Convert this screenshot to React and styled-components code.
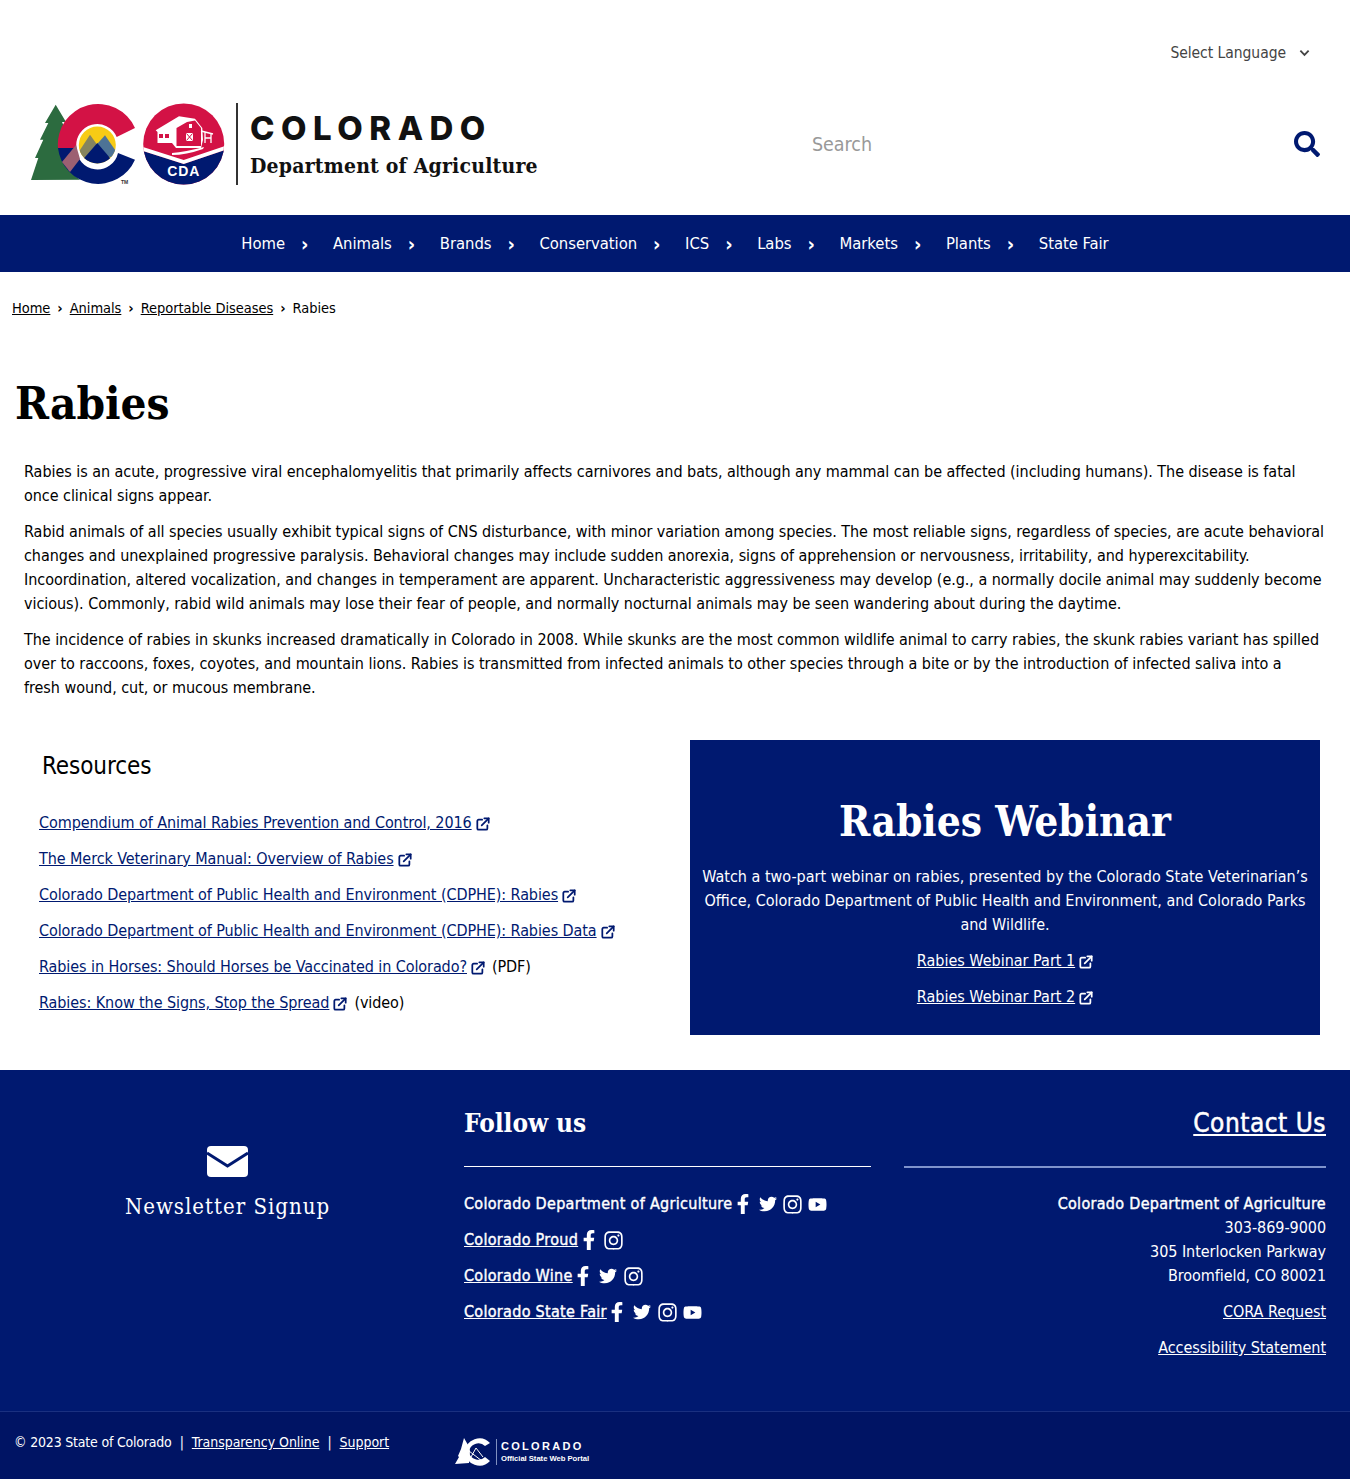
// Imports
import React from 'react';
import styled, { createGlobalStyle, css } from 'styled-components';
import { FaFacebookF, FaTwitter, FaInstagram, FaYoutube, FaSearch } from 'react-icons/fa';

const NAVY = '#001970';
const BODY_FONT = '"DejaVu Sans Condensed", "DejaVu Sans", sans-serif';
const HEAD_FONT = '"DejaVu Serif Condensed", "DejaVu Serif", serif';

const GlobalStyle = createGlobalStyle`
	html, body{
		margin: 0;
		padding: 0;
		background: #fff;
		color: #000;
		font-family: ${BODY_FONT};
		font-size: 16px;
		line-height: 24px;
		letter-spacing: -0.045px;
	}
	*{
		box-sizing: border-box;
	}
`;

// Data
const navItems = ['Home', 'Animals', 'Brands', 'Conservation', 'ICS', 'Labs', 'Markets', 'Plants', 'State Fair'];

const resources = [
	{ label: 'Compendium of Animal Rabies Prevention and Control, 2016' },
	{ label: 'The Merck Veterinary Manual: Overview of Rabies' },
	{ label: 'Colorado Department of Public Health and Environment (CDPHE): Rabies' },
	{ label: 'Colorado Department of Public Health and Environment (CDPHE): Rabies Data' },
	{ label: 'Rabies in Horses: Should Horses be Vaccinated in Colorado?', note: '(PDF)' },
	{ label: 'Rabies: Know the Signs, Stop the Spread', note: '(video)' },
];

const socials = [
	{ label: 'Colorado Department of Agriculture', plain: true, icons: ['f', 't', 'i', 'y'] },
	{ label: 'Colorado Proud', icons: ['f', 'i'] },
	{ label: 'Colorado Wine', icons: ['f', 't', 'i'] },
	{ label: 'Colorado State Fair', icons: ['f', 't', 'i', 'y'] },
];

const socialIcons = {
	f: { Icon: FaFacebookF, size: 20 },
	t: { Icon: FaTwitter, size: 18 },
	i: { Icon: FaInstagram, size: 21 },
	y: { Icon: FaYoutube, size: 19 },
};

// Drawings
const ExternalIcon = ({ color }) => (
	<ExternalSvg viewBox="0 0 16 16" fill="none" stroke={ color } strokeWidth="2" strokeLinecap="round" strokeLinejoin="round">
		<path d="M7 3H3a1.500 1.500 0 0 0-1.500 1.500v8.500A1.500 1.500 0 0 0 3 14.500h8.500A1.500 1.500 0 0 0 13 13V9.500"/>
		<path d="M9.500 1.500h5v5"/>
		<path d="M14.500 1.500 6.500 9.500"/>
	</ExternalSvg>
);

const ColoradoMark = () => (
	<svg width="196" height="84" viewBox="30 102 196 84">
		<defs>
			<clipPath id="sun"><circle cx="97.300" cy="145" r="18.500"/></clipPath>
			<clipPath id="seal"><circle cx="183.700" cy="144" r="40.500"/></clipPath>
		</defs>
		{/* Tree */}
		<path fill="#2c6b3f" d="M55.700 104.700 66 122 62 122 70 140 68 170 80 179.700 31 180 38.300 158 35 158 43.300 139.700 40 139.700 48.300 123 45 123Z"/>
		{/* C */}
		<path fill="#d31245" d="M135 128A40.300 40.300 0 0 0 58 148L76.500 148A21 21 0 0 1 116.700 137Z"/>
		<path fill={ NAVY } d="M58 148A40.300 40.300 0 0 0 135 159.700L118 153A21 21 0 0 1 76.500 148Z"/>
		<path fill="#9c6072" d="M62 162 76 145 80 159 70 172Z"/>
		{/* Sun and peaks */}
		<g clipPath="url(#sun)">
			<rect x="76" y="124" width="42" height="42" fill="#f7cb15"/>
			<path fill="#85845f" d="M72 162 90 134.700 108 160Z"/>
			<path fill="#4d7396" d="M90 152 105 135.300 122 160Z"/>
			<path fill={ NAVY } d="M72 172 97.300 143 122 172Z"/>
		</g>
		<text x="121" y="184" fontSize="5" fontWeight="700" fill="#333" fontFamily="Liberation Sans, sans-serif">TM</text>
		{/* Seal */}
		<g clipPath="url(#seal)">
			<rect x="143" y="103" width="82" height="83" fill="#d31245"/>
			<path fill={ NAVY } d="M143 151 183.700 164 225 150 225 186 143 186Z"/>
			<path fill="#fff" d="M143 147 183.700 160 225 146 225 150 183.700 164 143 151Z"/>
		</g>
		{/* Barn */}
		<path fill="#fff" d="M155.700 130.300 179 116.300 195 118.700 202.300 128 203 140 201 148 176 148 172 143 157.500 143 157.500 132Z"/>
		<path fill="#d31245" d="M176.500 146 176.500 128 187 122 195 120.500 201 128 201 146ZM159 134h4v4h-4zM165 134h4v4h-4z"/>
		<path fill="#fff" d="M186 133h7v8h-7zM189 124h3v4h-3z"/>
		<path fill="none" stroke="#d31245" d="M186.500 133.500 192.500 140.500M192.500 133.500 186.500 140.500"/>
		<path fill="none" stroke="#fff" strokeWidth="1.300" d="M201 131 213 134M205 132V143M211 134V143M205 138H211"/>
		<path fill="#fff" d="M172 153Q185 152 204 147L203 149Q186 155 172 155Z"/>
		<text x="183.700" y="176" textAnchor="middle" fontSize="14" fontWeight="700" letterSpacing="0.800" fill="#fff" fontFamily="Liberation Sans, sans-serif">CDA</text>
	</svg>
);

const PortalMark = () => (
	<svg width="36" height="30" viewBox="0 0 36 30">
		<path fill="#fff" d="M9 1 13 8 15 14 14 26 0 27 4 20 3 19 6 12Z"/>
		<path fill="#fff" d="M35 6A14.500 14.500 0 0 0 10 15L14 15A9.500 9.500 0 0 1 30 9ZM10 15A14.500 14.500 0 0 0 35 24L30 20A9.500 9.500 0 0 1 14 15Z"/>
		<path fill="none" stroke="#fff" strokeWidth="1" d="M16 20 21 11 28 20M14 14 27 24"/>
	</svg>
);

// Component
const App = () => {

	// Return
	return(
		<Page>
			<GlobalStyle/>

			{/* Header */}
			<Header>
				<LanguageRow>
					<span>Select Language</span>
					<Chevron viewBox="0 0 12 8"><path d="M1.500 1.500 6 6l4.500-4.500"/></Chevron>
				</LanguageRow>
				<BrandRow>
					<Brand>
						<ColoradoMark/>
						<BrandRule/>
						<BrandText>
							<BrandState>COLORADO</BrandState>
							<BrandDept>Department of Agriculture</BrandDept>
						</BrandText>
					</Brand>
					<SearchBox>
						<SearchText>Search</SearchText>
						<FaSearch size={ 26 } color={ NAVY }/>
					</SearchBox>
				</BrandRow>
			</Header>
			{/* Header */}

			{/* Navigation */}
			<Nav>
				{navItems.map((item, index) => (
					<NavItem key={ item }>
						<NavLink>{ item }</NavLink>
						{index < navItems.length - 1 && <NavArrow>›</NavArrow>}
					</NavItem>
				))}
			</Nav>
			{/* Navigation */}

			{/* Breadcrumb */}
			<Crumbs>
				<u>Home</u><CrumbSep>›</CrumbSep>
				<u>Animals</u><CrumbSep>›</CrumbSep>
				<u>Reportable Diseases</u><CrumbSep>›</CrumbSep>
				<span>Rabies</span>
			</Crumbs>
			{/* Breadcrumb */}

			<Title>Rabies</Title>

			{/* Intro */}
			<Intro>
				<p>Rabies is an acute, progressive viral encephalomyelitis that primarily affects carnivores and bats, although any mammal can be affected (including humans). The disease is fatal once clinical signs appear.</p>
				<p>Rabid animals of all species usually exhibit typical signs of CNS disturbance, with minor variation among species. The most reliable signs, regardless of species, are acute behavioral changes and unexplained progressive paralysis. Behavioral changes may include sudden anorexia, signs of apprehension or nervousness, irritability, and hyperexcitability. Incoordination, altered vocalization, and changes in temperament are apparent. Uncharacteristic aggressiveness may develop (e.g., a normally docile animal may suddenly become vicious). Commonly, rabid wild animals may lose their fear of people, and normally nocturnal animals may be seen wandering about during the daytime.</p>
				<p>The incidence of rabies in skunks increased dramatically in Colorado in 2008. While skunks are the most common wildlife animal to carry rabies, the skunk rabies variant has spilled over to raccoons, foxes, coyotes, and mountain lions. Rabies is transmitted from infected animals to other species through a bite or by the introduction of infected saliva into a<br/>fresh wound, cut, or mucous membrane.</p>
			</Intro>
			{/* Intro */}

			{/* Columns */}
			<Columns>
				<Resources>
					<ResourcesTitle>Resources</ResourcesTitle>
					{resources.map((item) => (
						<ResourceRow key={ item.label }>
							<ResourceLink>{ item.label }</ResourceLink>
							<ExternalIcon color={ NAVY }/>
							{item.note && <Note>{ item.note }</Note>}
						</ResourceRow>
					))}
				</Resources>
				<Webinar>
					<WebinarTitle>Rabies Webinar</WebinarTitle>
					<WebinarText>Watch a two-part webinar on rabies, presented by the Colorado State Veterinarian’s Office, Colorado Department of Public Health and Environment, and Colorado Parks and Wildlife.</WebinarText>
					<WebinarLink><u>Rabies Webinar Part 1</u><ExternalIcon color="#fff"/></WebinarLink>
					<WebinarLink><u>Rabies Webinar Part 2</u><ExternalIcon color="#fff"/></WebinarLink>
				</Webinar>
			</Columns>
			{/* Columns */}

			{/* Footer */}
			<Footer>
				<FooterMain>
					<Newsletter>
						<svg width="41" height="31" viewBox="0 0 41 31">
							<rect width="41" height="31" rx="4" fill="#fff"/>
							<path d="M0 7 20.500 20 41 7" fill="none" stroke={ NAVY } strokeWidth="3"/>
						</svg>
						<NewsletterLabel>Newsletter Signup</NewsletterLabel>
					</Newsletter>
					<Follow>
						<FollowTitle>Follow us</FollowTitle>
						<FooterRule/>
						{socials.map((row) => (
							<SocialRow key={ row.label }>
								{row.plain ? <span>{ row.label }</span> : <u>{ row.label }</u>}
								<SocialIcons>
									{row.icons.map((key) => {
										const { Icon, size } = socialIcons[key];
										return <SocialSlot key={ key }><Icon size={ size }/></SocialSlot>;
									})}
								</SocialIcons>
							</SocialRow>
						))}
					</Follow>
					<Contact>
						<ContactTitle>Contact Us</ContactTitle>
						<FooterRule $thick/>
						<ContactBlock>
							<ContactName>Colorado Department of Agriculture</ContactName>
							<span>303-869-9000</span>
							<span>305 Interlocken Parkway</span>
							<span>Broomfield, CO 80021</span>
						</ContactBlock>
						<ContactLink>CORA Request</ContactLink>
						<ContactLink>Accessibility Statement</ContactLink>
					</Contact>
				</FooterMain>
				<FooterBottom>
					<Legal>
						<LegalOwner>© 2023 State of Colorado</LegalOwner>
						<LegalSep>|</LegalSep>
						<u>Transparency Online</u>
						<LegalSep>|</LegalSep>
						<u>Support</u>
					</Legal>
					<Portal>
						<PortalMark/>
						<PortalText>
							<PortalState>COLORADO</PortalState>
							<PortalName>Official State Web Portal</PortalName>
						</PortalText>
					</Portal>
				</FooterBottom>
			</Footer>
			{/* Footer */}

		</Page>
	);

};

// Styled
const semiBold = css`
	letter-spacing: 0.3px;
	-webkit-text-stroke: 0.4px currentColor;
`;

const Page = styled.div`
	width: 1350px;
`;

const Header = styled.header`
	height: 215px;
	padding: 41px 30px 0;
`;

const LanguageRow = styled.div`
	display: flex;
	justify-content: flex-end;
	align-items: center;
	gap: 13px;
	height: 24px;
	padding-right: 10px;
	font-size: 15.500px;
	color: #444;
`;

const Chevron = styled.svg`
	width: 11px;
	height: 8px;
	fill: none;
	stroke: #444;
	stroke-width: 2;
`;

const BrandRow = styled.div`
	display: flex;
	justify-content: space-between;
	align-items: center;
	margin-top: 37px;
`;

const Brand = styled.div`
	display: flex;
	align-items: center;
	height: 84px;
`;

const BrandRule = styled.div`
	width: 2px;
	height: 82px;
	margin: 0 12px 0 10px;
	background: #333;
`;

const BrandText = styled.div`
	display: flex;
	flex-direction: column;
	padding-top: 2px;
`;

const BrandState = styled.div`
	font-family: Inter, "Liberation Sans", sans-serif;
	font-weight: 800;
	font-size: 33px;
	line-height: 34px;
	letter-spacing: 6.500px;
	color: #111;
`;

const BrandDept = styled.div`
	margin-top: 7px;
	font-family: ${HEAD_FONT};
	font-weight: 700;
	font-size: 21px;
	line-height: 28px;
	letter-spacing: 0.2px;
	color: #111;
	white-space: nowrap;
`;

const SearchBox = styled.div`
	display: flex;
	justify-content: space-between;
	align-items: center;
	width: 508px;
`;

const SearchText = styled.span`
	padding-top: 2px;
	font-size: 19.500px;
	color: #999;
`;

const Nav = styled.nav`
	display: flex;
	justify-content: center;
	align-items: center;
	height: 57px;
	background: ${NAVY};
	color: #fff;
`;

const NavItem = styled.div`
	display: flex;
	align-items: center;
`;

const NavLink = styled.span`
	font-size: 16.500px;
`;

const NavArrow = styled.span`
	width: 48px;
	padding-left: 16px;
	font-size: 20px;
	font-weight: 700;
`;

const Crumbs = styled.div`
	display: flex;
	align-items: center;
	height: 24px;
	margin: 24px 0 0 12px;
	font-size: 14.500px;
`;

const CrumbSep = styled.span`
	margin: 0 7px;
	font-weight: 700;
`;

const Title = styled.h1`
	margin: 57px 0 0 15px;
	font-family: ${HEAD_FONT};
	font-weight: 700;
	font-size: 45.500px;
	line-height: 52px;
`;

const Intro = styled.div`
	margin-top: 31px;
	padding: 0 24px;
	p{
		margin: 0 0 12px;
	}
`;

const Columns = styled.div`
	display: flex;
	justify-content: space-between;
	margin-top: 40px;
	padding: 0 30px 0 39px;
`;

const Resources = styled.div`
	width: 620px;
	letter-spacing: -0.08px;
`;

const ResourcesTitle = styled.h2`
	margin: 11px 0 30px 3px;
	font-weight: 400;
	font-size: 24px;
	line-height: 30px;
`;

const ResourceRow = styled.div`
	display: flex;
	align-items: center;
	height: 24px;
	margin-bottom: 12px;
`;

const ResourceLink = styled.span`
	color: ${NAVY};
	text-decoration: underline;
`;

const ExternalSvg = styled.svg`
	flex: none;
	width: 14px;
	height: 14px;
	margin: 2px 0 0 4px;
`;

const Note = styled.span`
	margin-left: 7px;
`;

const Webinar = styled.section`
	display: flex;
	flex-direction: column;
	align-items: center;
	width: 630px;
	height: 295px;
	padding: 56px 12px 0;
	background: ${NAVY};
	color: #fff;
	text-align: center;
	letter-spacing: 0;
`;

const WebinarTitle = styled.h2`
	margin: 0 0 17px;
	font-family: ${HEAD_FONT};
	font-weight: 700;
	font-size: 42px;
	line-height: 52px;
`;

const WebinarText = styled.p`
	margin: 0 0 12px;
`;

const WebinarLink = styled.div`
	display: flex;
	align-items: center;
	height: 24px;
	margin-bottom: 12px;
`;

const Footer = styled.footer`
	margin-top: 35px;
	background: ${NAVY};
	color: #fff;
`;

const FooterMain = styled.div`
	display: grid;
	grid-template-columns: 464px 440px 422px;
	height: 341px;
`;

const Newsletter = styled.div`
	display: flex;
	flex-direction: column;
	align-items: center;
	width: 455px;
	padding-top: 76px;
`;

const NewsletterLabel = styled.div`
	margin-top: 15px;
	font-family: ${HEAD_FONT};
	font-size: 22px;
	line-height: 30px;
	letter-spacing: 1px;
`;

const Follow = styled.div`
	padding: 33px 33px 0 0;
`;

const FollowTitle = styled.h3`
	height: 39px;
	margin: 0;
	font-family: ${HEAD_FONT};
	font-weight: 700;
	font-size: 26px;
	line-height: 40px;
`;

const FooterRule = styled.hr`
	height: ${({ $thick }) => ($thick ? '2px' : '1px')};
	margin: 24px 0 ${({ $thick }) => ($thick ? '24px' : '25px')};
	border: 0;
	background: ${({ $thick }) => ($thick ? '#7f93cc' : '#fff')};
`;

const SocialRow = styled.div`
	display: flex;
	align-items: center;
	height: 24px;
	margin-bottom: 12px;
	${semiBold}
`;

const SocialIcons = styled.div`
	display: flex;
	align-items: center;
	gap: 6px;
	margin-left: 1px;
`;

const SocialSlot = styled.span`
	display: flex;
	justify-content: center;
	width: 19px;
	svg{
		flex: none;
	}
`;

const Contact = styled.div`
	padding-top: 33px;
	text-align: right;
`;

const ContactTitle = styled.h3`
	height: 39px;
	margin: 0;
	font-weight: 400;
	font-size: 26px;
	line-height: 40px;
	letter-spacing: 0.5px;
	text-decoration: underline;
	-webkit-text-stroke: 0.5px currentColor;
`;

const ContactBlock = styled.div`
	display: flex;
	flex-direction: column;
	margin-bottom: 12px;
`;

const ContactName = styled.span`
	${semiBold}
`;

const ContactLink = styled.div`
	height: 24px;
	margin-bottom: 12px;
	text-decoration: underline;
`;

const FooterBottom = styled.div`
	display: flex;
	height: 68px;
	padding: 18px 0 0 14px;
	border-top: 1px solid #1a3080;
	background: #001464;
	font-size: 14px;
`;

const Legal = styled.div`
	display: flex;
	width: 441px;
	height: 24px;
	align-items: center;
`;

const LegalOwner = styled.span`
	letter-spacing: -0.2px;
`;

const LegalSep = styled.span`
	margin: 0 8px;
`;

const Portal = styled.div`
	display: flex;
	align-items: center;
	height: 30px;
	margin-top: 7px;
`;

const PortalText = styled.div`
	display: flex;
	flex-direction: column;
	margin-left: 5px;
	padding-left: 4px;
	border-left: 1px solid #8090c0;
`;

const PortalState = styled.span`
	font-family: "Liberation Sans", sans-serif;
	font-weight: 700;
	font-size: 11px;
	line-height: 14px;
	letter-spacing: 2.300px;
`;

const PortalName = styled.span`
	font-family: "Liberation Sans", sans-serif;
	font-weight: 700;
	font-size: 7.700px;
	line-height: 12px;
`;

// Export
export default App;
